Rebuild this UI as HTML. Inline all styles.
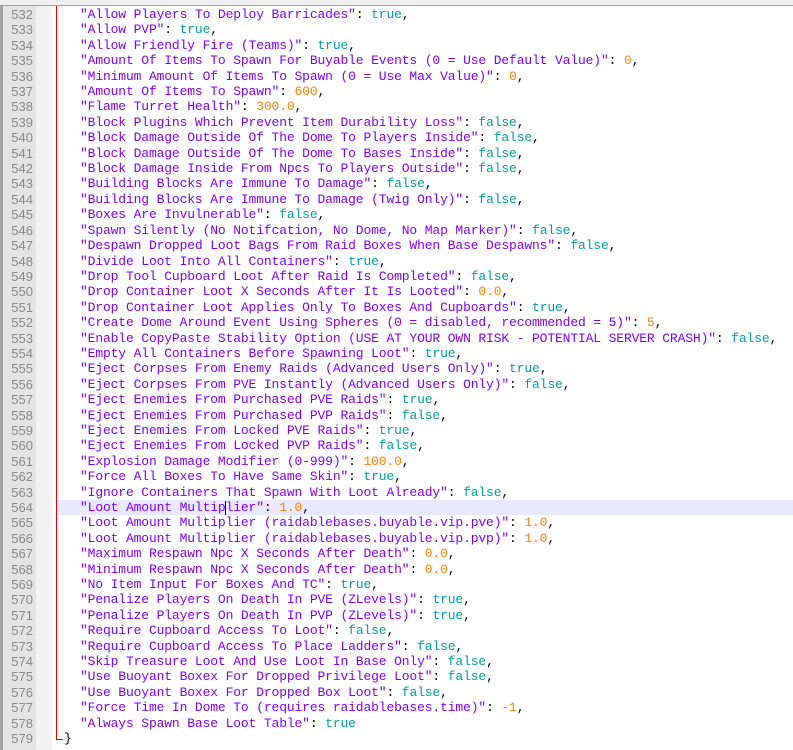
<!DOCTYPE html>
<html><head><meta charset="utf-8"><style>
body{margin:0;width:793px;height:750px;overflow:hidden;background:#fff;position:relative;font-family:"Liberation Mono",monospace;}
.top{position:absolute;left:0;top:0;width:793px;height:5px;background:#f0f0f0;border-bottom:1px solid #a0a0a0;}
.lb{position:absolute;left:0;top:6px;width:3px;height:744px;background:#a0a0a0;}
.g1{position:absolute;left:3px;top:6px;width:33px;height:744px;background:#e4e4e4;}
.g2{position:absolute;left:36px;top:6px;width:16px;height:744px;background:#f2f2f2;}
.red{position:absolute;left:56px;top:6px;width:1px;height:734px;background:#e00;}
.redh{position:absolute;left:56px;top:739px;width:7px;height:1px;background:#e00;}
.hl{position:absolute;left:57px;top:500px;width:736px;height:15px;background:#e8e8ff;}
.nums{position:absolute;left:3px;top:7px;width:30px;text-align:right;color:#888;font-size:13px;line-height:15.4px;font-family:"Liberation Sans",sans-serif;}
.code{position:absolute;left:80px;top:7px;font-size:13px;line-height:15.4px;white-space:pre;color:#000;letter-spacing:-0.14px;}
.s{color:#8000ff}.b{color:#00a0a0}.n{color:#ff8000}
.cur{position:absolute;left:225px;top:501px;width:1px;height:14px;background:#000;}
</style></head><body>
<div class="top"></div><div class="lb"></div><div class="g1"></div><div class="g2"></div>
<div class="hl"></div>
<div class="red"></div><div class="redh"></div>
<div class="nums">532<br>533<br>534<br>535<br>536<br>537<br>538<br>539<br>540<br>541<br>542<br>543<br>544<br>545<br>546<br>547<br>548<br>549<br>550<br>551<br>552<br>553<br>554<br>555<br>556<br>557<br>558<br>559<br>560<br>561<br>562<br>563<br>564<br>565<br>566<br>567<br>568<br>569<br>570<br>571<br>572<br>573<br>574<br>575<br>576<br>577<br>578<br>579</div>
<div class="code"><span class="s">"Allow Players To Deploy Barricades"</span>: <span class="b">true</span>,
<span class="s">"Allow PVP"</span>: <span class="b">true</span>,
<span class="s">"Allow Friendly Fire (Teams)"</span>: <span class="b">true</span>,
<span class="s">"Amount Of Items To Spawn For Buyable Events (0 = Use Default Value)"</span>: <span class="n">0</span>,
<span class="s">"Minimum Amount Of Items To Spawn (0 = Use Max Value)"</span>: <span class="n">0</span>,
<span class="s">"Amount Of Items To Spawn"</span>: <span class="n">600</span>,
<span class="s">"Flame Turret Health"</span>: <span class="n">300.0</span>,
<span class="s">"Block Plugins Which Prevent Item Durability Loss"</span>: <span class="b">false</span>,
<span class="s">"Block Damage Outside Of The Dome To Players Inside"</span>: <span class="b">false</span>,
<span class="s">"Block Damage Outside Of The Dome To Bases Inside"</span>: <span class="b">false</span>,
<span class="s">"Block Damage Inside From Npcs To Players Outside"</span>: <span class="b">false</span>,
<span class="s">"Building Blocks Are Immune To Damage"</span>: <span class="b">false</span>,
<span class="s">"Building Blocks Are Immune To Damage (Twig Only)"</span>: <span class="b">false</span>,
<span class="s">"Boxes Are Invulnerable"</span>: <span class="b">false</span>,
<span class="s">"Spawn Silently (No Notifcation, No Dome, No Map Marker)"</span>: <span class="b">false</span>,
<span class="s">"Despawn Dropped Loot Bags From Raid Boxes When Base Despawns"</span>: <span class="b">false</span>,
<span class="s">"Divide Loot Into All Containers"</span>: <span class="b">true</span>,
<span class="s">"Drop Tool Cupboard Loot After Raid Is Completed"</span>: <span class="b">false</span>,
<span class="s">"Drop Container Loot X Seconds After It Is Looted"</span>: <span class="n">0.0</span>,
<span class="s">"Drop Container Loot Applies Only To Boxes And Cupboards"</span>: <span class="b">true</span>,
<span class="s">"Create Dome Around Event Using Spheres (0 = disabled, recommended = 5)"</span>: <span class="n">5</span>,
<span class="s">"Enable CopyPaste Stability Option (USE AT YOUR OWN RISK - POTENTIAL SERVER CRASH)"</span>: <span class="b">false</span>,
<span class="s">"Empty All Containers Before Spawning Loot"</span>: <span class="b">true</span>,
<span class="s">"Eject Corpses From Enemy Raids (Advanced Users Only)"</span>: <span class="b">true</span>,
<span class="s">"Eject Corpses From PVE Instantly (Advanced Users Only)"</span>: <span class="b">false</span>,
<span class="s">"Eject Enemies From Purchased PVE Raids"</span>: <span class="b">true</span>,
<span class="s">"Eject Enemies From Purchased PVP Raids"</span>: <span class="b">false</span>,
<span class="s">"Eject Enemies From Locked PVE Raids"</span>: <span class="b">true</span>,
<span class="s">"Eject Enemies From Locked PVP Raids"</span>: <span class="b">false</span>,
<span class="s">"Explosion Damage Modifier (0-999)"</span>: <span class="n">100.0</span>,
<span class="s">"Force All Boxes To Have Same Skin"</span>: <span class="b">true</span>,
<span class="s">"Ignore Containers That Spawn With Loot Already"</span>: <span class="b">false</span>,
<span class="s">"Loot Amount Multiplier"</span>: <span class="n">1.0</span>,
<span class="s">"Loot Amount Multiplier (raidablebases.buyable.vip.pve)"</span>: <span class="n">1.0</span>,
<span class="s">"Loot Amount Multiplier (raidablebases.buyable.vip.pvp)"</span>: <span class="n">1.0</span>,
<span class="s">"Maximum Respawn Npc X Seconds After Death"</span>: <span class="n">0.0</span>,
<span class="s">"Minimum Respawn Npc X Seconds After Death"</span>: <span class="n">0.0</span>,
<span class="s">"No Item Input For Boxes And TC"</span>: <span class="b">true</span>,
<span class="s">"Penalize Players On Death In PVE (ZLevels)"</span>: <span class="b">true</span>,
<span class="s">"Penalize Players On Death In PVP (ZLevels)"</span>: <span class="b">true</span>,
<span class="s">"Require Cupboard Access To Loot"</span>: <span class="b">false</span>,
<span class="s">"Require Cupboard Access To Place Ladders"</span>: <span class="b">false</span>,
<span class="s">"Skip Treasure Loot And Use Loot In Base Only"</span>: <span class="b">false</span>,
<span class="s">"Use Buoyant Boxex For Dropped Privilege Loot"</span>: <span class="b">false</span>,
<span class="s">"Use Buoyant Boxex For Dropped Box Loot"</span>: <span class="b">false</span>,
<span class="s">"Force Time In Dome To (requires raidablebases.time)"</span>: <span class="n">-1</span>,
<span class="s">"Always Spawn Base Loot Table"</span>: <span class="b">true</span>
</div>
<div class="code" style="left:64px;top:731px">}</div>
<div class="cur"></div>
</body></html>
